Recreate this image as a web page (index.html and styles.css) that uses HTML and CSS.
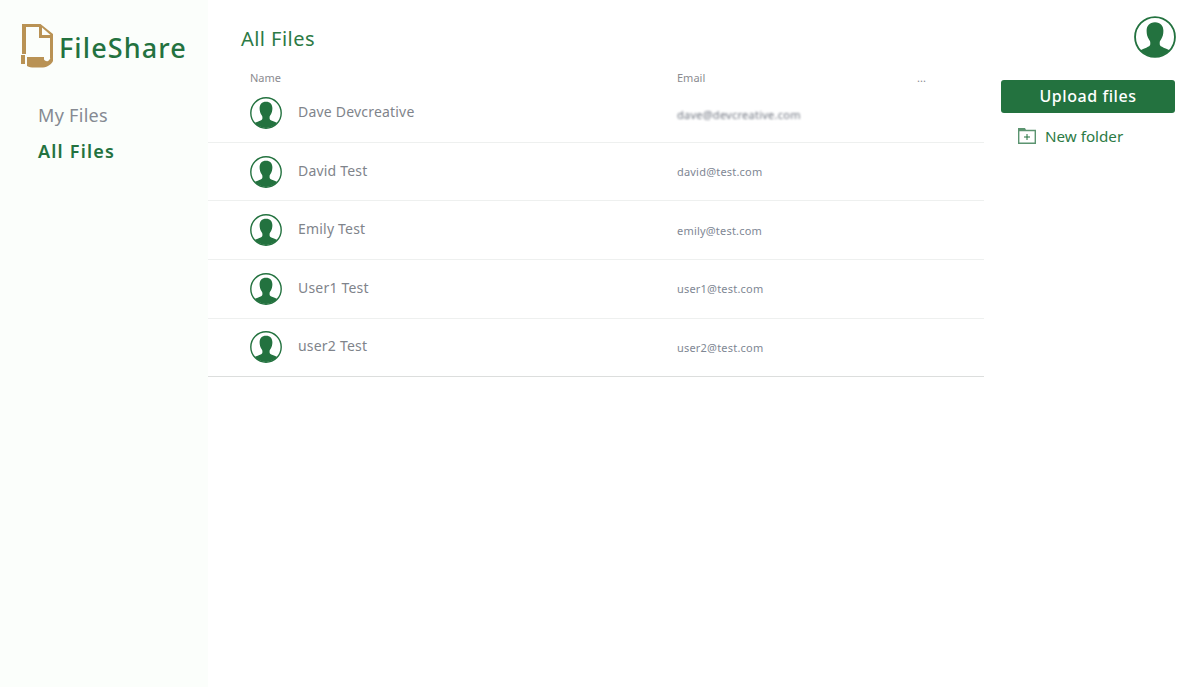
FILE: index.html
```html
<!DOCTYPE html>
<html lang="en">
<head>
<meta charset="utf-8">
<title>FileShare</title>
<link rel="stylesheet" href="styles.css">
</head>
<body>
<svg class="defs" width="0" height="0" aria-hidden="true">
  <defs>
    <clipPath id="disc"><circle cx="16" cy="16" r="15"/></clipPath>
    <symbol id="person" viewBox="0 0 32 32">
      <circle cx="16" cy="16" r="15.2" fill="#fff" stroke="#23723f" stroke-width="1.4"/>
      <g clip-path="url(#disc)" fill="#23723f">
        <path d="M16 4.800c-4.200 0-6.400 2.700-6.400 6.500 0 2.600.6 4.700 1.600 6.300.6 1 1.200 1.700 1.200 2.500v1.500c0 1.200-1.200 1.800-3 2.500-2.800 1.100-5 1.700-6 3.200-.5.8-.7 2-.7 5.200h26.600c0-3.200-.2-4.400-.7-5.200-1-1.500-3.200-2.100-6-3.200-1.800-.7-3-1.300-3-2.500v-1.500c0-.8.6-1.500 1.200-2.500 1-1.600 1.600-3.700 1.600-6.300 0-3.800-2.200-6.500-6.400-6.500z"/>
      </g>
    </symbol>
  </defs>
</svg>
<div class="app">
  <aside class="sidebar">
    <div class="brand">
      <svg class="brand-icon" width="33" height="44" viewBox="0 0 33 44" aria-hidden="true">
        <path fill="#b99254" d="M2 0h18.500L33 10v24h-3V14H19V3H6v27H2zM22 3.500V11h8.500z"/>
        <path fill="#b99254" d="M1 31h4v9H1zM7 33h17v2.500c1 1.500 2.500 2 4 1.500 1-.5 2-1.500 2.500-3.500H34c-.5 3.500-2 5.500-4.500 7.500-2 1.500-4 2.500-6.500 2.500H14c-2.500 0-5-.5-7-1.500z"/>
      </svg>
      <span class="brand-name">FileShare</span>
    </div>
    <nav class="nav">
      <a class="nav-item">My Files</a>
      <a class="nav-item nav-active">All Files</a>
    </nav>
  </aside>
  <main class="main">
    <h1 class="title">All Files</h1>
    <div class="table-head">
      <span class="col-name">Name</span>
      <span class="col-email">Email</span>
      <span class="col-more">...</span>
    </div>
    <div class="row">
      <div class="col-name user"><svg class="avatar"><use href="#person"/></svg><span class="user-name">Dave Devcreative</span></div>
      <div class="col-email email"><span class="blurred">dave@devcreative.com</span></div>
    </div>
    <div class="row">
      <div class="col-name user"><svg class="avatar"><use href="#person"/></svg><span class="user-name">David Test</span></div>
      <div class="col-email email">david@test.com</div>
    </div>
    <div class="row">
      <div class="col-name user"><svg class="avatar"><use href="#person"/></svg><span class="user-name">Emily Test</span></div>
      <div class="col-email email">emily@test.com</div>
    </div>
    <div class="row">
      <div class="col-name user"><svg class="avatar"><use href="#person"/></svg><span class="user-name">User1 Test</span></div>
      <div class="col-email email">user1@test.com</div>
    </div>
    <div class="row row-last">
      <div class="col-name user"><svg class="avatar"><use href="#person"/></svg><span class="user-name">user2 Test</span></div>
      <div class="col-email email">user2@test.com</div>
    </div>
  </main>
  <aside class="actions">
    <div class="account"><svg class="account-avatar"><use href="#person"/></svg></div>
    <button class="upload">Upload files</button>
    <a class="new-folder">
      <svg width="18" height="16" viewBox="0 0 18 16" aria-hidden="true">
        <path fill="none" stroke="#5b9470" stroke-width="1.400" d="M.7 2.500h16.600v12.800H.7z"/>
        <path fill="#5b9470" d="M0 0h7l1.500 3H0z"/>
        <path fill="none" stroke="#23723f" d="M9 6v6M6 9h6"/>
      </svg>
      <span>New folder</span>
    </a>
  </aside>
</div>
</body>
</html>
```
FILE: styles.css
```css
* { box-sizing: border-box; }
html, body { margin: 0; height: 100%; background: #fff; }
body { font-family: "Noto Sans", "Open Sans", sans-serif; color: #7c8087; overflow: hidden; }
.defs { position: absolute; }
.app { display: flex; height: 687px; }
.sidebar { width: 208px; flex: none; background: #fbfefb; }
.brand { display: flex; align-items: flex-start; padding: 24px 0 0 20px; height: 92px; }
.brand-icon { flex: none; }
.brand-name { margin: 5px 0 0 6px; font-size: 27px; line-height: 38px; font-weight: 500; color: #23723f; letter-spacing: 1.100px; }
.nav { display: flex; flex-direction: column; padding-left: 38px; gap: 10.500px; padding-top: 11px; }
.nav-item { font-size: 18px; line-height: 25px; color: #858a92; letter-spacing: .3px; }
.nav-active { color: #23723f; font-weight: 600; letter-spacing: 1.200px; }
.main { width: 776px; flex: none; }
.title { margin: 0; padding: 24px 0 0 33px; height: 69px; font-size: 20px; line-height: 30px; font-weight: 400; color: #2c7a45; letter-spacing: .45px; }
.table-head { display: flex; height: 15.200px; align-items: flex-start; padding-left: 42px; font-size: 11px; line-height: 18px; color: #8b8b90; }
.col-name { width: 427px; flex: none; }
.col-email { width: 240px; flex: none; }
.row { display: flex; align-items: center; height: 58.600px; padding-left: 42px; border-bottom: 1px solid #eef0ef; }
.row-last { border-bottom-color: #dcdedd; }
.user { display: flex; align-items: center; gap: 16px; }
.avatar { width: 32px; height: 32px; flex: none; }
.user-name { font-size: 14px; letter-spacing: .2px; color: #7f848b; position: relative; top: -1.400px; }
.email { font-size: 11px; color: #808794; letter-spacing: .2px; }
.blurred { filter: blur(1.300px); display: inline-block; letter-spacing: .25px; color: #6f7580; position: relative; top: 2px; }
.actions { flex: 1; padding: 16px 16px 0 17px; }
.account { display: flex; justify-content: flex-end; height: 64px; }
.account-avatar { width: 42px; height: 42px; }
.upload { display: block; width: 174px; height: 33px; border: 0; border-radius: 3px; background: #23723f; color: #fff; font: 500 16px/30px "Noto Sans", sans-serif; letter-spacing: .55px; padding: 0 0 1px; }
.new-folder { display: flex; align-items: center; gap: 9px; margin: 12px 0 0 17px; font-size: 15.200px; line-height: 22px; color: #2c7a45; }
```
